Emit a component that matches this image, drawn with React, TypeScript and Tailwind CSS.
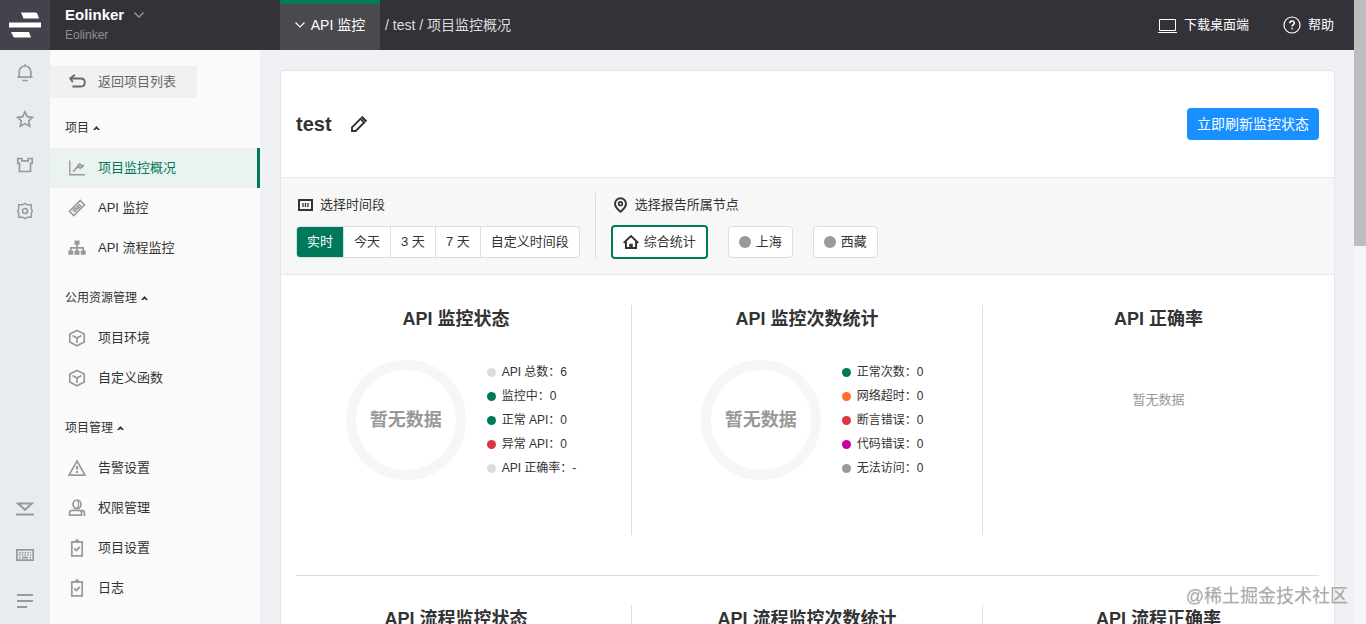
import { useState, type ReactNode } from 'react';

interface IconProps {
  children: ReactNode;
  className?: string;
}

function Icon({ children, className = 'size-[18px]' }: IconProps) {
  return (
    <svg viewBox="0 0 18 18" fill="none" stroke="currentColor" strokeWidth="1.7" className={`shrink-0 ${className}`} aria-hidden="true">
      {children}
    </svg>
  );
}

const cube = (
  <Icon>
    <path d="M9 1.5 16.2 5v8L9 16.7 1.8 13V5z" />
    <path d="m4.5 6.5 4.5 2.6 4.5-2.6M9 9v5" />
  </Icon>
);

const clipboard = (
  <Icon>
    <path d="M3.8 2.8h10.4v14H3.8z" />
    <path d="M6.5 2.6h5M9 .3v2" strokeWidth="2.2" />
    <path d="m6.2 9.3 2.2 2.2 3.5-3.6" strokeWidth="1.9" />
  </Icon>
);

interface NavGroup {
  title: string;
  items: { label: string; icon: ReactNode }[];
}

const navGroups: NavGroup[] = [
  {
    title: '项目',
    items: [
      {
        label: '项目监控概况',
        icon: (
          <Icon>
            <path d="M1.8 1.5v14.2H17" strokeWidth="1.4" />
            <path d="m5 12.5 5.2-5.2 2 2 3.5-3.5" />
            <path d="m8.500 7 3-3 4.500 3.500-1.300 1.300-3.200-2.300-1.700 1.700z" fill="currentColor" stroke="none" />
          </Icon>
        ),
      },
      {
        label: 'API 监控',
        icon: (
          <Icon>
            <path d="M12.3 1.500 16.500 5.700 5.700 16.500 1.500 12.300z" strokeWidth="1.600" />
            <path d="M8.600 8.200 11.300 5.500l1.500 1.500-2.700 2.700M9.400 9.800 6.700 12.500 5.200 11l2.700-2.700M7.700 10.300l2.600-2.600" strokeWidth="1.400" />
          </Icon>
        ),
      },
      {
        label: 'API 流程监控',
        icon: (
          <Icon>
            <path d="M9 4v9M2.800 13V8.800h12.400V13" />
            <path d="M6.500 1.500h5v4.300h-5zM.3 11.500h5v4.300h-5zM6.500 11.500h5v4.300h-5zM12.700 11.500h5v4.300h-5z" fill="currentColor" stroke="none" />
          </Icon>
        ),
      },
    ],
  },
  {
    title: '公用资源管理',
    items: [
      { label: '项目环境', icon: cube },
      { label: '自定义函数', icon: cube },
    ],
  },
  {
    title: '项目管理',
    items: [
      {
        label: '告警设置',
        icon: (
          <Icon>
            <path d="M9 2 17 16.200H1z" />
            <path d="M9 7v3.500M9 12v2" strokeWidth="2.200" />
          </Icon>
        ),
      },
      {
        label: '权限管理',
        icon: (
          <Icon>
            <ellipse cx="9" cy="5.300" rx="4" ry="4.300" />
            <path d="M9.500 1.500c1.600 2 1.600 5.500-.6 7.600" strokeWidth="1.300" />
            <path d="M1.500 16.200v-2.200c0-1.600 1.400-2.600 3-2.600h6.400c1.600 0 2.700 1 2.700 2.600v2.200zM13.500 11.400c2 .2 3 1.400 3 2.800v2.800" />
          </Icon>
        ),
      },
      { label: '项目设置', icon: clipboard },
      { label: '日志', icon: clipboard },
    ],
  },
];

const railTop = [
  {
    label: '通知',
    icon: (
      <Icon>
        <path d="M1.500 13.200h15M3.200 13V7.800C3.200 4.600 6 2 9 2s5.800 2.600 5.800 5.800V13M9 .3V2M6.300 16.500h5.400" />
      </Icon>
    ),
  },
  {
    label: '收藏',
    icon: (
      <Icon>
        <path d="m9 1.800 2.300 4.800 5.200.7-3.800 3.600 1 5.300L9 13.600l-4.700 2.600 1-5.300L1.500 7.300l5.200-.7z" />
      </Icon>
    ),
  },
  {
    label: '市场',
    icon: (
      <Icon>
        <path d="M1.800 2.500h4v2.300h6.400V2.500h4v4.800h-1.700v8.200h-11V7.300H1.800z" />
      </Icon>
    ),
  },
  {
    label: '设置',
    icon: (
      <Icon>
        <path d="M6.500 2.800 9 1.300l2.500 1.500h3.800v4L16.300 9l-1 2.200v4h-3.800L9 16.700l-2.500-1.500H2.700v-4L1.700 9l1-2.200v-4z" strokeWidth="1.500" />
        <circle cx="9" cy="9" r="2.500" />
      </Icon>
    ),
  },
];

const railBottom = [
  {
    label: '下载',
    icon: (
      <Icon>
        <path d="M2 3.500h14L9 9.800z" strokeWidth="2" />
        <path d="M0 14.500h18" strokeWidth="2" />
      </Icon>
    ),
  },
  {
    label: '快捷键',
    icon: (
      <Icon>
        <path d="M.8 3.800h16.400v10.400H.8z" />
        <path d="M3 6.700h12M2.800 9h12.400" strokeDasharray="1.600 1.200" strokeWidth="1.600" />
        <path d="M3 11.700h1.500M6 11.700h6M13.500 11.700H15" />
      </Icon>
    ),
  },
  {
    label: '菜单',
    icon: (
      <Icon>
        <path d="M1 3h16M1 9h16M1 15h10" strokeWidth="2" />
      </Icon>
    ),
  },
];

const ranges = ['实时', '今天', '3 天', '7 天', '自定义时间段'];
const nodes = ['综合统计', '上海', '西藏'];

const statusLegend = [
  { color: 'bg-[#dddddd]', text: 'API 总数：6' },
  { color: 'bg-[#00785a]', text: '监控中：0' },
  { color: 'bg-[#00785a]', text: '正常 API：0' },
  { color: 'bg-[#d9363e]', text: '异常 API：0' },
  { color: 'bg-[#dddddd]', text: 'API 正确率：-' },
];

const countLegend = [
  { color: 'bg-[#00785a]', text: '正常次数：0' },
  { color: 'bg-[#ff6f2c]', text: '网络超时：0' },
  { color: 'bg-[#d9363e]', text: '断言错误：0' },
  { color: 'bg-[#c800a1]', text: '代码错误：0' },
  { color: 'bg-[#999999]', text: '无法访问：0' },
];

function Donut({ legend }: { legend: { color: string; text: string }[] }) {
  return (
    <div className="mt-[27px] flex items-center justify-center gap-[21px] pl-2.5">
      <div className="flex size-[120px] items-center justify-center rounded-full border-10 border-[#f6f6f6] text-lg font-bold whitespace-nowrap text-[#999]">
        暂无数据
      </div>
      <ul className="text-xs leading-6">
        {legend.map((row) => (
          <li key={row.text} className="flex items-center gap-1.5 whitespace-nowrap">
            <span className={`size-[9px] rounded-full ${row.color}`} />
            {row.text}
          </li>
        ))}
      </ul>
    </div>
  );
}

function StatColumn({ title, last, children }: { title: string; last?: boolean; children?: ReactNode }) {
  return (
    <section className={`min-h-[230px] ${last ? '' : 'border-r border-[#ddd]'}`}>
      <h2 className="text-center text-lg leading-7 font-bold">{title}</h2>
      {children}
    </section>
  );
}

export default function App() {
  const [active, setActive] = useState('项目监控概况');
  const [range, setRange] = useState('实时');
  const [node, setNode] = useState('综合统计');

  return (
    <div className="relative flex h-screen overflow-hidden bg-[#eff1f5] font-['Liberation_Sans','Noto_Sans_CJK_SC',sans-serif] text-[13px] text-[#333]">
      <div className="flex min-w-0 flex-1 flex-col">
        {/* Top bar */}
        <header className="flex h-[50px] shrink-0 bg-[#333238] text-white">
          <a href="#" aria-label="Eolinker" className="flex w-[50px] items-center justify-center bg-[#42434d]">
            <svg viewBox="0 0 32 26" fill="currentColor" className="h-[26px] w-8" aria-hidden="true">
              <path d="M12 .5h14.500q1.500 0 2 1.500l1.500 4.500H14.500zM0 10.500h32v5H0zM2 20h18l2 5.500H6q-1.500 0-2-1.500z" />
            </svg>
          </a>
          <div className="flex w-[230px] flex-col justify-center pl-[15px]">
            <button className="flex items-center gap-2.5 text-left text-[15px] leading-5 font-bold">
              Eolinker
              <svg viewBox="0 0 10 6" fill="none" stroke="#999" strokeWidth="1.400" className="h-1.5 w-2.5" aria-hidden="true">
                <path d="m.5.5 4.500 4.500L9.500.5" />
              </svg>
            </button>
            <span className="text-xs leading-5 text-[#8f8f93]">Eolinker</span>
          </div>
          <nav className="flex text-sm text-[#ddd]">
            <button className="flex w-[100px] items-center justify-center gap-1.5 border-t-4 border-[#00785a] bg-[#4a494e] pb-1 text-white">
              <svg viewBox="0 0 10 6" fill="none" stroke="currentColor" strokeWidth="1.200" className="h-1.5 w-2.5" aria-hidden="true">
                <path d="m.5.5 4.500 4.500L9.500.5" />
              </svg>
              API 监控
            </button>
            <span className="self-center pl-[5px]">/ test / 项目监控概况</span>
          </nav>
          <div className="ml-auto flex items-center gap-[34px] pr-5">
            <a href="#" className="flex items-center gap-[7px]">
              <svg viewBox="0 0 19 15" fill="none" stroke="currentColor" strokeWidth="1" className="h-[15px] w-[19px]" aria-hidden="true">
                <path d="M1.500 1.500h16v11h-16zM0 14.500h19" />
              </svg>
              下载桌面端
            </a>
            <a href="#" className="flex items-center gap-[7px]">
              <Icon>
                <circle cx="9" cy="9" r="8" strokeWidth="1.200" />
                <path d="M6.800 7.300c0-3 4.500-2.900 4.500-.3 0 1.600-2.200 1.700-2.200 3.400M9.100 11.800v1.400" strokeWidth="1.500" />
              </Icon>
              帮助
            </a>
          </div>
        </header>

        <div className="flex min-h-0 flex-1">
          {/* Icon rail */}
          <aside className="flex w-[50px] shrink-0 flex-col justify-between bg-[#e8ecf1] text-[#999]">
            <div>
              {railTop.map((item) => (
                <button key={item.label} aria-label={item.label} className="flex h-[46px] w-full items-center justify-center">
                  {item.icon}
                </button>
              ))}
            </div>
            <div>
              {railBottom.map((item) => (
                <button key={item.label} aria-label={item.label} className="flex h-[46px] w-full items-center justify-center">
                  {item.icon}
                </button>
              ))}
            </div>
          </aside>

          {/* Project menu */}
          <nav className="w-[210px] shrink-0 overflow-hidden bg-[#fafafa] pt-4">
            <button className="flex h-8 w-[147px] items-center gap-3 bg-[#f1f1f1] pl-[18px] text-[#666]">
              <Icon>
                <path d="M2.500 5.500h10.300q4 0 4 4t-4 4H4.500" strokeWidth="1.800" />
                <path d="m6.800 1.800-4.500 3.700 2.500 3.700" strokeWidth="1.800" />
              </Icon>
              返回项目列表
            </button>
            {navGroups.map((group) => (
              <div key={group.title} className="mt-2.5">
                <button className="flex h-10 w-full items-center gap-1 pl-[15px] text-xs">
                  {group.title}
                  <svg viewBox="0 0 7 4" fill="currentColor" className="h-1 w-[7px]" aria-hidden="true">
                    <path d="M3.500 0 7 4H5L3.500 2.800 2 4H0z" />
                  </svg>
                </button>
                {group.items.map((item) => (
                  <button
                    key={item.label}
                    onClick={() => setActive(item.label)}
                    className={`flex h-10 w-full items-center gap-3 border-r-3 pl-[18px] ${
                      active === item.label ? 'border-[#00785a] bg-[#eaf3f0] text-[#00785a]' : 'border-transparent'
                    }`}
                  >
                    <span className="text-[#999]">{item.icon}</span>
                    {item.label}
                  </button>
                ))}
              </div>
            ))}
          </nav>

          {/* Content */}
          <main className="min-w-0 flex-1 overflow-hidden py-5 pr-[19px] pl-5">
            <div className="rounded border border-[#e4e5e8] bg-white">
              <div className="flex h-[106px] items-center gap-[18px] px-[15px]">
                <h1 className="text-xl font-bold">test</h1>
                <button aria-label="编辑">
                  <Icon>
                    <path d="M2 16v-3.700L10.500 3.800l3.700 3.700L5.700 16z" strokeWidth="1.900" />
                    <path d="m11.500 1.600 4.900 4.900" strokeWidth="2.400" />
                  </Icon>
                </button>
                <button className="ml-auto h-8 rounded bg-[#1890ff] px-2.5 text-sm text-white">立即刷新监控状态</button>
              </div>

              <div className="flex border-y border-[#e8e8e8] bg-[#f7f7f7] p-[15px]">
                <div className="border-r border-[#ddd] pr-[15px]">
                  <h3 className="flex h-6 items-center gap-1.5">
                    <Icon>
                      <path d="M3 4h13v10H3z" strokeWidth="2" />
                      <path d="M7 7v4M9.500 7v4M12 7v4" strokeWidth="1.300" />
                    </Icon>
                    选择时间段
                  </h3>
                  <div className="mt-2 flex h-[34px] items-center">
                    <div className="flex h-8 overflow-hidden rounded-sm border border-[#ddd] bg-white">
                      {ranges.map((item, i) => (
                        <button
                          key={item}
                          onClick={() => setRange(item)}
                          className={`px-2.5 whitespace-nowrap ${i > 0 ? 'border-l border-[#ddd]' : ''} ${
                            range === item ? 'bg-[#00785a] text-white' : ''
                          }`}
                        >
                          {item}
                        </button>
                      ))}
                    </div>
                  </div>
                </div>
                <div className="pl-[15px]">
                  <h3 className="flex h-6 items-center gap-1.5">
                    <Icon>
                      <path d="M9.500 15.800C6 13 4 10.300 4 7.800a5.500 5.500 0 0 1 11 0c0 2.500-2 5.200-5.500 8z" strokeWidth="2" />
                      <circle cx="9.500" cy="7.700" r="1.800" />
                    </Icon>
                    选择报告所属节点
                  </h3>
                  <div className="mt-2 flex h-[34px] items-center gap-5">
                    {nodes.map((item, i) => (
                      <button
                        key={item}
                        onClick={() => setNode(item)}
                        className={`flex items-center gap-[5px] rounded-sm bg-white px-2.5 ${
                          node === item ? 'h-[34px] border-2 border-[#00785a]' : 'h-8 border border-[#ddd]'
                        }`}
                      >
                        {i === 0 ? (
                          <Icon className="size-4">
                            <path d="M.8 10 9 2.300l8.200 7.700M3.300 8.500v7.200h11.400V8.500" strokeWidth="2.200" />
                            <path d="M7 11h4v5H7z" fill="currentColor" stroke="none" />
                          </Icon>
                        ) : (
                          <span className="size-3 rounded-full bg-[#999]" />
                        )}
                        {item}
                      </button>
                    ))}
                  </div>
                </div>
              </div>

              <div className="grid grid-cols-3 pt-[30px] pb-10">
                <StatColumn title="API 监控状态">
                  <Donut legend={statusLegend} />
                </StatColumn>
                <StatColumn title="API 监控次数统计">
                  <Donut legend={countLegend} />
                </StatColumn>
                <StatColumn title="API 正确率" last>
                  <p className="mt-[57px] text-center text-[#999]">暂无数据</p>
                </StatColumn>
              </div>
              <hr className="mx-[15px] border-[#ddd]" />
              <div className="grid grid-cols-3 pt-[29px] pb-10">
                <StatColumn title="API 流程监控状态" />
                <StatColumn title="API 流程监控次数统计" />
                <StatColumn title="API 流程正确率" last />
              </div>
            </div>
          </main>
        </div>
      </div>

      {/* Scroll bar */}
      <div className="w-3 shrink-0 bg-[#f6f6f7]">
        <div className="h-[246px] bg-[#bdbdbd]" />
      </div>

      <div className="pointer-events-none absolute right-[18px] bottom-4 text-lg leading-6 text-[#999]/80 text-shadow-2xs">
        @稀土掘金技术社区
      </div>
    </div>
  );
}
